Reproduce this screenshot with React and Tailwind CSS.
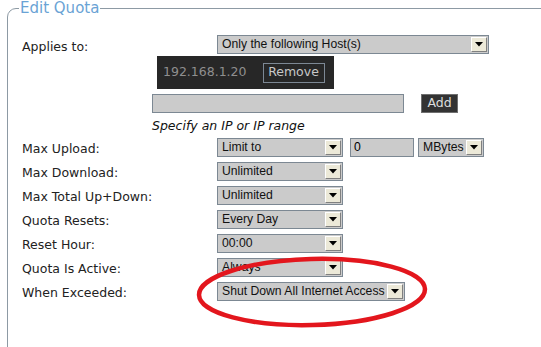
import React from "react";

const Arrow = () => (
  <div className="ml-auto mr-[1px] flex h-[15px] w-[16px] items-center justify-center border-t border-l border-b border-r border-t-white border-l-white border-b-[#808080] border-r-[#808080] bg-[#ece9d8]">
    <svg width="8" height="5" viewBox="0 0 8 5"><polygon points="0,0 8,0 4,4.5" fill="#000" /></svg>
  </div>
);

const Select = ({ w, children }) => (
  <div
    className="flex h-[19px] items-center border border-[#7c8893] bg-[#cbcbcb] text-[12.2px] text-[#111] shrink-0"
    style={{ width: w, fontFamily: '"Liberation Sans", Arial, sans-serif' }}
  >
    <span className="pl-[4px] whitespace-nowrap">{children}</span>
    <Arrow />
  </div>
);

const Row = ({ label, children }) => (
  <div className="flex h-[24px] items-start">
    <div className="w-[195px] shrink-0 pt-[2px] text-[12.5px] text-[#222]">{label}</div>
    <div className="flex items-start gap-[7px]">{children}</div>
  </div>
);

export default function App() {
  return (
    <div className="relative h-[347px] w-[541px] overflow-hidden bg-white" style={{ fontFamily: '"DejaVu Sans", Verdana, sans-serif' }}>
      <fieldset className="ml-[7px] h-[420px] w-[620px] rounded-tl-[9px] border border-[#8d9aa4] pl-[14px] pt-[19px]">
        <legend className="-ml-[3px] px-[1px] text-[15px] leading-[16px] text-[#6aa3d5]">Edit Quota</legend>
        <div className="flex h-[21px] items-start">
          <div className="w-[195px] shrink-0 pt-[3px] text-[12.5px] text-[#222]">Applies to:</div>
          <Select w={272}>Only the following Host(s)</Select>
        </div>
        <div className="ml-[135px] flex h-[33px] w-[177px] items-center bg-[#272727] pl-[6px]">
          <span className="text-[12.5px] text-[#8f8f8f]">192.168.1.20</span>
          <div className="ml-[16px] flex h-[20px] w-[62px] items-center justify-center border border-[#7d8894] text-[12.5px] text-[#c8c8c8]">Remove</div>
        </div>
        <div className="ml-[130px] mt-[5px] flex items-start">
          <div className="h-[19px] w-[252px] border border-[#7c8893] bg-[#cbcbcb]" />
          <div className="ml-[17px] flex h-[19px] w-[37px] items-center justify-center border border-[#6f6f6f] bg-[#333333] text-[12.5px] text-[#dedede]">Add</div>
        </div>
        <div className="ml-[130px] mt-[4px] h-[21px] text-[12.5px] italic text-[#111]">Specify an IP or IP range</div>
        <Row label="Max Upload:">
          <Select w={126}>Limit to</Select>
          <div className="flex h-[19px] w-[64px] items-center border border-[#7c8893] bg-[#cbcbcb] pl-[3px] text-[12.2px]" style={{ fontFamily: '"Liberation Sans", Arial, sans-serif' }}>0</div>
          <div className="-ml-[3px]"><Select w={66}>MBytes</Select></div>
        </Row>
        <Row label="Max Download:"><Select w={126}>Unlimited</Select></Row>
        <Row label="Max Total Up+Down:"><Select w={126}>Unlimited</Select></Row>
        <Row label="Quota Resets:"><Select w={126}>Every Day</Select></Row>
        <Row label="Reset Hour:"><Select w={126}>00:00</Select></Row>
        <Row label="Quota Is Active:"><Select w={126}>Always</Select></Row>
        <Row label="When Exceeded:"><Select w={188}>Shut Down All Internet Access</Select></Row>
      </fieldset>
      <svg className="pointer-events-none absolute left-0 top-0" width="541" height="347">
        <ellipse cx="312" cy="292" rx="113" ry="33" fill="none" stroke="#e3161d" strokeWidth="4.5" transform="rotate(-1.5 312 292)" />
      </svg>
    </div>
  );
}
